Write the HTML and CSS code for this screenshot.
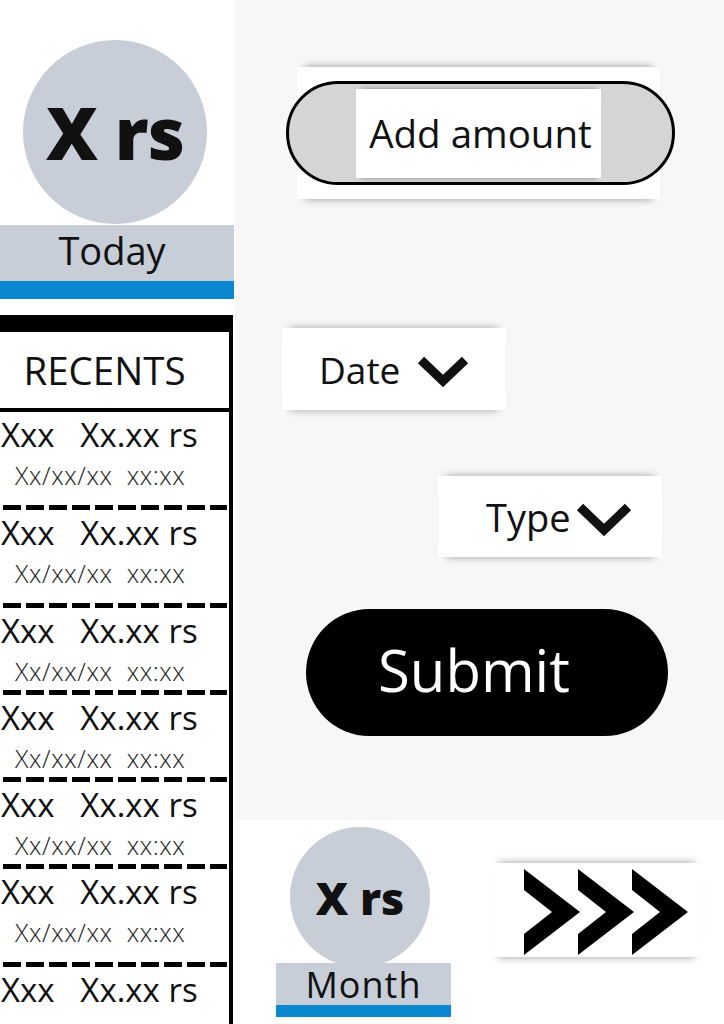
FILE: index.html
```html
<!DOCTYPE html>
<html lang="en">
<head>
  <meta charset="UTF-8" />
  <meta name="viewport" content="width=device-width, initial-scale=1.0"/>
  <title>Expense Tracker</title>
  <link rel="stylesheet" href="styles.css">
</head>
<body>

<div class="page">
  <aside class="side">
    <div class="today">
      <div class="bubble"><span>X rs</span></div>
      <div class="stat-label">Today</div>
      <div class="stat-bar"></div>
    </div>

    <section class="recents">
      <h2 class="recents-title">RECENTS</h2>
      <ul class="tx-list">
        <li class="tx tall"><div class="tx-main">Xxx   Xx.xx rs</div><div class="tx-date">Xx/xx/xx  xx:xx</div></li>
        <li class="tx tall"><div class="tx-main">Xxx   Xx.xx rs</div><div class="tx-date">Xx/xx/xx  xx:xx</div></li>
        <li class="tx"><div class="tx-main">Xxx   Xx.xx rs</div><div class="tx-date">Xx/xx/xx  xx:xx</div></li>
        <li class="tx"><div class="tx-main">Xxx   Xx.xx rs</div><div class="tx-date">Xx/xx/xx  xx:xx</div></li>
        <li class="tx"><div class="tx-main">Xxx   Xx.xx rs</div><div class="tx-date">Xx/xx/xx  xx:xx</div></li>
        <li class="tx tall"><div class="tx-main">Xxx   Xx.xx rs</div><div class="tx-date">Xx/xx/xx  xx:xx</div></li>
        <li class="tx"><div class="tx-main">Xxx   Xx.xx rs</div></li>
      </ul>
    </section>
  </aside>

  <main class="main">
    <div class="panel">
      <div class="amount-card">
        <div class="amount-pill">
          <div class="amount-field">Add amount</div>
        </div>
      </div>

      <div class="select select-date">
        <span>Date</span>
        <svg class="chev" width="52" height="32" viewBox="0 0 52 32">
          <polyline points="4,5 26,26 48,5" fill="none" stroke="#111" stroke-width="9"/>
        </svg>
      </div>

      <div class="select select-type">
        <span>Type</span>
        <svg class="chev" width="56" height="34" viewBox="0 0 56 34">
          <polyline points="4,5 28,28 52,5" fill="none" stroke="#111" stroke-width="9"/>
        </svg>
      </div>

      <button class="submit">Submit</button>
    </div>

    <div class="bottom">
      <div class="month">
        <div class="bubble bubble-small"><span>X rs</span></div>
        <div class="stat-label month-label">Month</div>
        <div class="stat-bar month-bar"></div>
      </div>

      <div class="next">
        <svg width="56" height="86" viewBox="0 0 56 86"><polygon points="0,0 56,43 0,86 0,65 28,43 0,21" fill="#000"/></svg>
        <svg width="56" height="86" viewBox="0 0 56 86"><polygon points="0,0 56,43 0,86 0,65 28,43 0,21" fill="#000"/></svg>
        <svg width="56" height="86" viewBox="0 0 56 86"><polygon points="0,0 56,43 0,86 0,65 28,43 0,21" fill="#000"/></svg>
      </div>
    </div>
  </main>
</div>

</body>
</html>
```

FILE: styles.css
```css
* { box-sizing: border-box; }
body {
  margin: 0;
  font-family: 'Open Sans', 'Noto Sans', sans-serif;
  color: #111;
  background: #fff;
}
.page {
  display: flex;
  width: 724px;
  height: 1024px;
  overflow: hidden;
}

/* left column */
.side {
  width: 235px;
  flex: none;
  display: flex;
  flex-direction: column;
  background: #fff;
}
.today { padding-top: 40px; }
.bubble {
  width: 184px;
  height: 184px;
  margin-left: 23px;
  border-radius: 50%;
  background: #c7ced7;
  display: flex;
  align-items: center;
  justify-content: center;
  font-size: 72px;
  font-weight: 800;
  letter-spacing: -1px;
}
.stat-label {
  width: 234px;
  height: 56px;
  margin-top: 1px;
  padding-right: 10px;
  background: #c7ced7;
  font-size: 38px;
  line-height: 50px;
  text-align: center;
}
.stat-bar {
  width: 234px;
  height: 18px;
  background: #0a87cf;
}

.recents {
  flex: 1;
  width: 233px;
  margin-top: 16px;
  border-top: 17px solid #000;
  border-right: 4px solid #000;
}
.recents-title {
  margin: 0;
  height: 80px;
  padding: 1px 20px 0 0;
  border-bottom: 4px solid #000;
  font-size: 38.5px;
  font-weight: 400;
  line-height: 74px;
  text-align: center;
}
.tx-list {
  list-style: none;
  margin: 0;
  padding: 0;
}
.tx {
  height: 87px;
  padding-top: 3px;
  position: relative;
}
.tx.tall { height: 98px; }
.tx:not(:last-child)::after {
  content: '';
  position: absolute;
  left: 3px;
  bottom: 0;
  width: 224px;
  height: 5px;
  background: repeating-linear-gradient(to right, #000 0 18px, transparent 18px 23px);
}
.tx-main {
  padding-left: 1px;
  font-size: 33px;
  line-height: 40px;
  white-space: pre;
}
.tx-date {
  margin-top: 6px;
  padding-left: 15px;
  font-size: 25px;
  font-weight: 300;
  line-height: 28px;
  letter-spacing: 0.6px;
  color: #222;
  white-space: pre;
}

/* right column */
.main {
  flex: 1;
  display: flex;
  flex-direction: column;
}
.panel {
  height: 820px;
  background: #f7f7f7;
  padding-top: 67px;
  display: flex;
  flex-direction: column;
  align-items: flex-start;
}
.amount-card {
  width: 363px;
  height: 132px;
  margin-left: 62px;
  padding-top: 14px;
  background: #fff;
  box-shadow: 0 -8px 8px -8px rgba(0, 0, 0, 0.4), 0 8px 8px -8px rgba(0, 0, 0, 0.4);
}
.amount-pill {
  height: 104px;
  margin: 0 -15px 0 -11px;
  border: 3px solid #000;
  border-radius: 52px;
  background: #d5d5d5;
  display: flex;
  align-items: center;
  justify-content: center;
  padding-right: 4px;
}
.amount-field {
  width: 245px;
  height: 89px;
  background: #fff;
  display: flex;
  align-items: center;
  justify-content: center;
  padding-left: 4px;
  font-size: 38.5px;
  box-shadow: 0 -5px 5px -5px rgba(0, 0, 0, 0.35), 0 5px 5px -5px rgba(0, 0, 0, 0.35);
}
.select {
  width: 224px;
  height: 82px;
  background: #fff;
  display: flex;
  align-items: center;
  font-size: 37px;
  box-shadow: 0 -8px 8px -8px rgba(0, 0, 0, 0.35), 0 8px 8px -8px rgba(0, 0, 0, 0.35);
}
.select span { line-height: 1; }
.select-date {
  margin: 129px 0 0 47px;
  padding-left: 37px;
  gap: 17px;
}
.select-type {
  height: 81px;
  margin: 66px 0 0 203px;
  padding-left: 48px;
  gap: 5px;
  font-size: 38px;
}
.chev { flex: none; margin-top: 4px; }
.submit {
  width: 362px;
  height: 127px;
  margin: 52px 0 0 71px;
  padding: 0 26px 6px 0;
  border: none;
  border-radius: 64px;
  background: #000;
  color: #fff;
  font-family: inherit;
  font-size: 58px;
  cursor: pointer;
}

.bottom {
  flex: 1;
  display: flex;
  align-items: flex-start;
  padding-left: 41px;
  background: #fff;
}
.month { width: 175px; }
.bubble-small {
  width: 140px;
  height: 140px;
  margin: 7px 0 0 14px;
  font-size: 45px;
  letter-spacing: 0;
}
.month-label {
  width: 175px;
  height: 42px;
  margin-top: -4px;
  padding-right: 0;
  font-size: 36px;
  line-height: 44px;
  letter-spacing: 1px;
}
.month-bar {
  width: 175px;
  height: 12px;
}
.next {
  width: 213px;
  height: 94px;
  margin: 43px 0 0 39px;
  padding: 6px 0 0 34px;
  background: #fff;
  display: flex;
  box-shadow: 0 -8px 8px -8px rgba(0, 0, 0, 0.4), 0 8px 8px -8px rgba(0, 0, 0, 0.4);
}
.next svg { flex: none; margin-right: -2px; }
```
